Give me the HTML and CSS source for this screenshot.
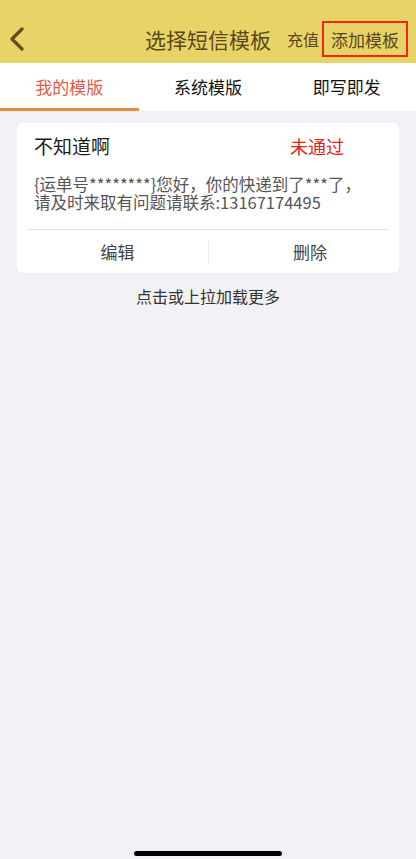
FILE: index.html
```html
<!DOCTYPE html>
<html lang="zh">
<head>
<meta charset="utf-8">
<title>选择短信模板</title>
<link rel="stylesheet" href="styles.css">
</head>
<body>
<div class="page">
  <header class="header">
    <div class="nav">
      <div class="nav-left">
        <svg class="back" width="16" height="24" viewBox="0 0 16 24"><path d="M13 2 L3 12 L13 22" fill="none" stroke="#6a4a1f" stroke-width="3.2" stroke-linecap="round" stroke-linejoin="round"/></svg>
      </div>
      <div class="title">选择短信模板</div>
      <div class="nav-right">
        <span class="recharge">充值</span>
        <span class="add">添加模板</span>
      </div>
    </div>
  </header>
  <nav class="tabs">
    <div class="tab active">我的模版</div>
    <div class="tab">系统模版</div>
    <div class="tab">即写即发</div>
  </nav>
  <main class="content">
    <section class="card">
      <div class="card-head">
        <span class="card-name">不知道啊</span>
        <span class="card-status">未通过</span>
      </div>
      <p class="card-body">{运单号********}您好，你的快递到了***了，请及时来取有问题请联系:13167174495</p>
      <div class="card-actions">
        <div class="action action-left">编辑</div>
        <div class="action action-right">删除</div>
      </div>
    </section>
    <div class="more">点击或上拉加载更多</div>
  </main>
  <div class="home-bar"></div>
</div>
</body>
</html>
```
FILE: styles.css
```css
* { box-sizing: border-box; }
html, body { margin: 0; padding: 0; }
body {
  background: #f2f2f6;
  font-family: "Noto Sans CJK SC", "Noto Sans", sans-serif;
  width: 416px;
  height: 859px;
  overflow: hidden;
}
.page { min-height: 859px; }
.header {
  background: #e8d366;
  height: 63px;
  padding-top: 20px;
}
.nav {
  display: grid;
  grid-template-columns: 1fr auto 1fr;
  align-items: center;
  height: 38px;
}
.nav-left { display: flex; align-items: center; padding-left: 9px; }
.back { display: block; }
.title {
  font-size: 21px;
  color: #5b4622;
  line-height: 1;
}
.nav-right {
  display: flex;
  justify-content: flex-end;
  align-items: center;
  gap: 3px;
  padding-right: 8px;
}
.recharge {
  font-size: 16px;
  color: #5b4622;
}
.add {
  font-size: 17px;
  color: #5b4622;
  border: 2px solid #f5231c;
  height: 36px;
  width: 86px;
  display: flex;
  align-items: center;
  justify-content: center;
}
.tabs {
  display: grid;
  grid-template-columns: repeat(3, 1fr);
  height: 48px;
  background: #fff;
}
.tab {
  display: flex;
  align-items: center;
  justify-content: center;
  font-size: 17px;
  color: #111;
  padding-top: 1px;
  border-bottom: 2px solid transparent;
}
.tab.active {
  color: #e35b4b;
  border-bottom: 3px solid #e98c3b;
}
.content { padding: 12px 17px 0; }
.card {
  background: #fff;
  border-radius: 6px;
  padding: 0 10px;
}
.card-head {
  display: flex;
  align-items: center;
  height: 45px;
  padding-left: 7px;
}
.card-name {
  font-size: 19px;
  color: #1a1a1a;
  width: 256px;
}
.card-status {
  font-size: 18px;
  color: #e3241d;
}
.card-body {
  margin: 0;
  padding: 7px 16px 18px 7px;
  font-size: 16.5px;
  line-height: 18px;
  color: #555;
}
.card-actions {
  display: grid;
  grid-template-columns: 1fr 1fr;
  border-top: 1px solid #e2e2e2;
  height: 44px;
  align-items: center;
}
.action {
  font-size: 17px;
  color: #444;
  text-align: center;
}
.action-right {
  border-left: 1px solid #ececec;
  padding-left: 22px;
  line-height: 23px;
}
.more {
  text-align: center;
  font-size: 16px;
  color: #333;
  margin-top: 11px;
}
.home-bar {
  position: fixed;
  left: 134px;
  bottom: 3px;
  width: 148px;
  height: 5px;
  border-radius: 3px;
  background: #000;
}
```
